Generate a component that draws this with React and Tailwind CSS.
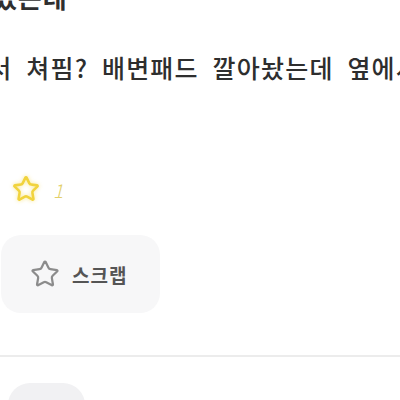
import { Star } from "lucide-react";

const font = { fontFamily: '"Noto Sans CJK KR", "Noto Sans", sans-serif' };

export default function App() {
  return (
    <div
      className="w-[400px] h-[400px] overflow-hidden bg-white text-[#2f2f2f]"
      style={font}
    >
      {/* title, cut off at the top */}
      <div className="-mt-[16px] -ml-[32px] whitespace-nowrap text-[26px] font-bold leading-none tracking-[1px]">
        있었는데
      </div>

      {/* body line */}
      <div className="mt-[40px] -ml-[36px] whitespace-nowrap text-[25px] font-medium leading-[34px] tracking-[1.2px] text-[#2e2e2e] [word-spacing:7px]">
        에서 쳐핌? 배변패드 깔아놨는데 옆에서 자고
      </div>

      {/* like count */}
      <div className="mt-[91px] ml-[12px] flex items-center gap-[13px]">
        <Star
          size={28}
          strokeWidth={2.2}
          className="text-[#f1d33d] drop-shadow-[0_0_2px_rgba(245,220,90,0.7)]"
        />
        <span className="text-[19px] font-light italic leading-none text-[#e2cf6a]">1</span>
      </div>

      {/* scrap button */}
      <div className="mt-[32px] ml-[1px] flex h-[78px] w-[159px] items-center gap-[12px] rounded-[20px] bg-[#f7f7f8] pl-[29px]">
        <Star size={30} strokeWidth={1.8} className="text-[#8c8c8c]" />
        <span className="text-[19px] font-bold leading-none tracking-[1px] text-[#555]">
          스크랩
        </span>
      </div>

      <div className="mt-[42px] h-[2px] w-full bg-[#ececec]" />

      <div className="mt-[26px] ml-[8px] h-[44px] w-[77px] rounded-[22px] bg-[#f1f1f3]" />
    </div>
  );
}
